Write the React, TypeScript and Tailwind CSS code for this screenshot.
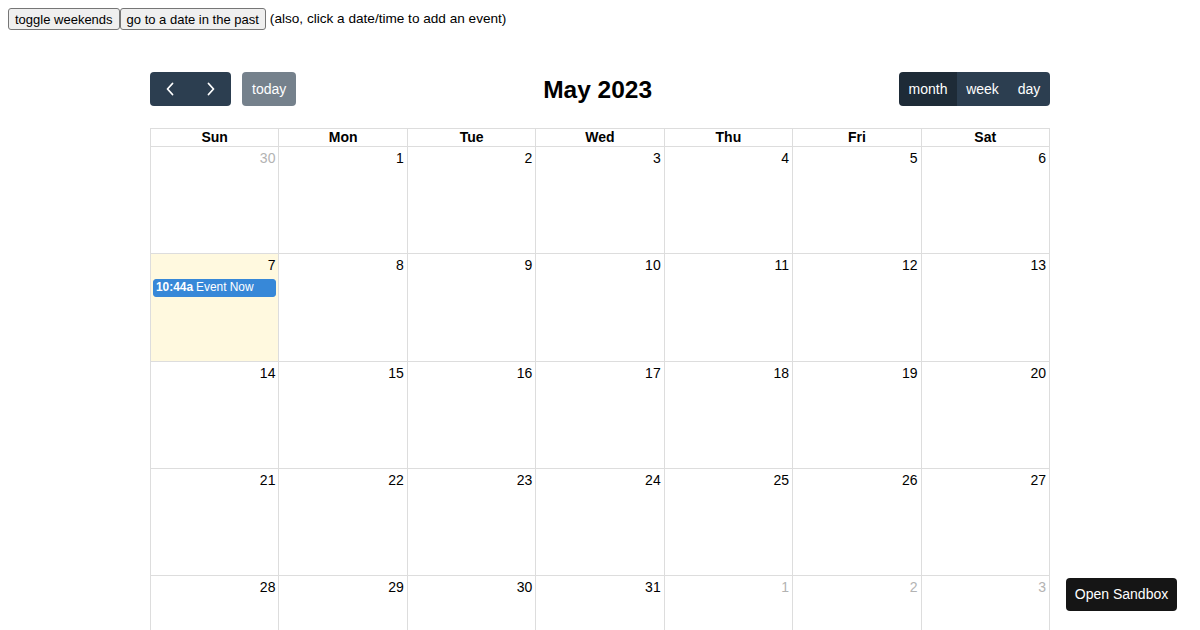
import React from "react";

const weekdays = ["Sun", "Mon", "Tue", "Wed", "Thu", "Fri", "Sat"];

type DayCell = {
  day: number;
  outside: boolean;
  today?: boolean;
};

const buildWeeks = (): DayCell[][] => {
  const cells: DayCell[] = [];
  cells.push({ day: 30, outside: true });
  for (let d = 1; d <= 31; d++) {
    cells.push({ day: d, outside: false, today: d === 7 });
  }
  for (let d = 1; d <= 10; d++) {
    cells.push({ day: d, outside: true });
  }
  const weeks: DayCell[][] = [];
  for (let i = 0; i < 6; i++) {
    weeks.push(cells.slice(i * 7, i * 7 + 7));
  }
  return weeks;
};

const Chevron = ({ dir }: { dir: "left" | "right" }) => (
  <svg width="10" height="14" viewBox="0 0 10 14" fill="none">
    <path
      d={dir === "left" ? "M7.5 1.5 L2.5 7 L7.5 12.5" : "M2.5 1.5 L7.5 7 L2.5 12.5"}
      stroke="white"
      strokeWidth="1.8"
      strokeLinecap="round"
      strokeLinejoin="round"
    />
  </svg>
);

const NativeButton = ({ children }: { children: React.ReactNode }) => (
  <button
    type="button"
    className="h-[22px] px-[6px] bg-[#efefef] border border-[#767676] rounded-[3px] text-[13px] text-black leading-none"
  >
    {children}
  </button>
);

export default function App() {
  const weeks = buildWeeks();

  return (
    <div className="min-h-screen bg-white text-black font-['Liberation_Sans',Arial,sans-serif] text-[14px]">
      <div className="flex items-center pl-2 pt-2">
        <NativeButton>toggle weekends</NativeButton>
        <NativeButton>go to a date in the past</NativeButton>
        <span className="ml-1 text-[13.6px]">(also, click a date/time to add an event)</span>
      </div>

      <div className="w-[900px] mx-auto mt-[42px]">
        <div className="flex items-center justify-between h-[34px] mb-[22px]">
          <div className="flex items-center">
            <div className="flex">
              <button
                type="button"
                className="w-[40px] h-[34px] flex items-center justify-center bg-[#2c3e50] rounded-l-[4px]"
              >
                <Chevron dir="left" />
              </button>
              <button
                type="button"
                className="w-[41px] h-[34px] flex items-center justify-center bg-[#2c3e50] rounded-r-[4px]"
              >
                <Chevron dir="right" />
              </button>
            </div>
            <button
              type="button"
              className="ml-[11px] h-[34px] px-[10px] bg-[#2c3e50] opacity-65 rounded-[4px] text-white text-[14px]"
            >
              today
            </button>
          </div>
          <h2 className="text-[24.5px] font-bold leading-none translate-y-[1px]">May 2023</h2>
          <div className="flex">
            <button
              type="button"
              className="h-[34px] w-[58px] bg-[#1e2b37] rounded-l-[4px] text-white text-[14px]"
            >
              month
            </button>
            <button type="button" className="h-[34px] w-[51px] bg-[#2c3e50] text-white text-[14px]">
              week
            </button>
            <button
              type="button"
              className="h-[34px] w-[42px] bg-[#2c3e50] rounded-r-[4px] text-white text-[14px]"
            >
              day
            </button>
          </div>
        </div>

        <table className="w-full table-fixed border-collapse">
          <thead>
            <tr>
              {weekdays.map((w) => (
                <th
                  key={w}
                  className="border border-[#dddddd] h-[18px] p-0 pb-[2px] text-[14px] font-bold leading-[14px] align-middle"
                >
                  {w}
                </th>
              ))}
            </tr>
          </thead>
          <tbody>
            {weeks.map((week, wi) => (
              <tr key={wi}>
                {week.map((cell, ci) => (
                  <td
                    key={ci}
                    className={`border border-[#dddddd] h-[107.3px] p-0 align-top ${
                      cell.today ? "bg-[#fff9df]" : "bg-white"
                    }`}
                  >
                    <div className="flex flex-col h-full">
                      <div
                        className={`text-right pt-[3px] pb-[4px] pr-[3px] leading-[16px] ${
                          cell.outside ? "text-[#b3b3b3]" : "text-black"
                        }`}
                      >
                        {cell.day}
                      </div>
                      {cell.today && (
                        <div className="mx-[2px] mt-[2px] h-[18px] flex items-center gap-[3px] bg-[#3788d8] border border-[#3788d8] rounded-[3px] text-white text-[11.9px] leading-none px-[1px]">
                          <span className="font-bold pl-[1px]">10:44a</span>
                          <span>Event Now</span>
                        </div>
                      )}
                    </div>
                  </td>
                ))}
              </tr>
            ))}
          </tbody>
        </table>
      </div>

      <button
        type="button"
        className="fixed right-[23px] bottom-[19px] w-[111px] h-[33px] bg-[#151515] rounded-[4px] text-white text-[14px]"
      >
        Open Sandbox
      </button>
    </div>
  );
}
